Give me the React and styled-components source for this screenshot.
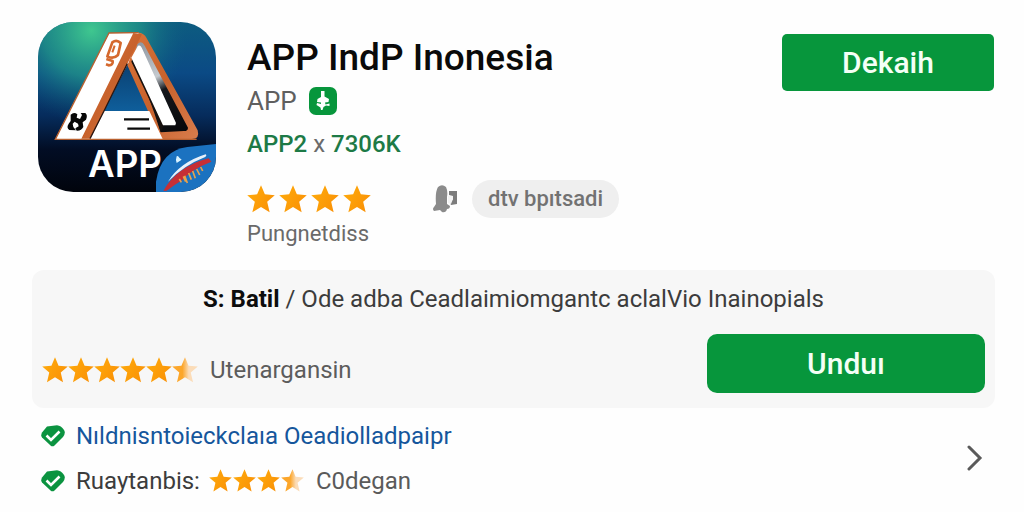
import styled, { createGlobalStyle } from 'styled-components';
import React, { useState } from 'react';

const GREEN = '#07963c';

const STAR = "12,0.2 15.3,8 23.8,8.8 17.3,14.4 19.4,23.4 12,18.8 4.6,23.4 6.7,14.4 0.2,8.8 8.7,8";

//fill : 1 = full, 0.5 = half
function Star(props) {
  const half = props.fill < 1;
  return (
    <StarSvg viewBox="0 0 24 24" $size={props.size} aria-hidden="true">
      <defs>
        <linearGradient id="starFull" x1="0" y1="0" x2="1" y2="0.6">
          <stop offset="0" stopColor="#ffad0c" />
          <stop offset="1" stopColor="#fa9206" />
        </linearGradient>
        <linearGradient id="starHalf">
          <stop offset="0.4" stopColor="#fca62a" />
          <stop offset="0.65" stopColor="#fbdcb8" />
        </linearGradient>
      </defs>
      <polygon points={STAR} fill={half ? "url(#starHalf)" : "url(#starFull)"} />
    </StarSvg>
  );
}

function Stars(props) {
  return (
    <StarsDiv $gap={props.gap} role="img" aria-label={props.value + " / 5"}>
      {Array.from({ length: Math.ceil(props.value) }, (_, i) => (
        <Star key={i} size={props.size} fill={Math.min(1, props.value - i)}></Star>
      ))}
    </StarsDiv>
  );
}

function Logo() {
  return (
    <LogoSvg viewBox="24 21 534 510" preserveAspectRatio="none" role="img" aria-label="APP">
      <defs>
        <linearGradient id="sky" x1="0" y1="0" x2="0" y2="1">
          <stop offset="0" stopColor="#0d5c80" />
          <stop offset="0.3" stopColor="#0b4a85" />
          <stop offset="0.55" stopColor="#062c5c" />
          <stop offset="0.75" stopColor="#020d24" />
          <stop offset="1" stopColor="#01040c" />
        </linearGradient>
        <radialGradient id="glow" cx="0.3" cy="0.05" r="0.55">
          <stop offset="0" stopColor="#3fc78f" />
          <stop offset="0.5" stopColor="#239a8a" stopOpacity="0.7" />
          <stop offset="1" stopColor="#0d5c80" stopOpacity="0" />
        </radialGradient>
        <linearGradient id="inner" x1="0" y1="0" x2="0" y2="1">
          <stop offset="0" stopColor="#0a3f70" />
          <stop offset="1" stopColor="#0f5f9c" />
        </linearGradient>
        <linearGradient id="copper" x1="0" y1="0" x2="1" y2="1">
          <stop offset="0" stopColor="#d9743a" />
          <stop offset="0.5" stopColor="#c8622c" />
          <stop offset="1" stopColor="#d87c4c" />
        </linearGradient>
        <linearGradient id="shade" gradientUnits="userSpaceOnUse" x1="330" y1="80" x2="460" y2="340">
          <stop offset="0" stopColor="#8d96a0" />
          <stop offset="0.4" stopColor="#c5cacf" />
          <stop offset="0.55" stopColor="#15171c" />
          <stop offset="1" stopColor="#08090c" />
        </linearGradient>
        <clipPath id="tile">
          <rect x="24" y="21" width="534" height="510" rx="106" />
        </clipPath>
      </defs>
      <g clipPath="url(#tile)">
        <rect x="24" y="21" width="534" height="510" fill="url(#sky)" />
        <rect x="24" y="21" width="534" height="510" fill="url(#glow)" />
        {/* A frame */}
        <path d="M292 140 L372 292 L218 290 Z" fill="url(#inner)" />
        <path d="M318 54 Q340 50 350 70 L503 346 Q510 372 486 372 L392 372 L290 146 Z" fill="url(#copper)" />
        <path d="M312 124 L322 88 Q334 74 344 92 L474 338 Q474 348 462 348 L392 352 L372 292 Z" fill="url(#shade)" />
        <path d="M304 140 L376 292 L392 352 L402 330 L310 124 Z" fill="#17110f" />
        <path d="M324 92 Q332 88 338 104 L438 324 L436 331 L399 331 L304 128 Z" fill="#fff" />
        <path d="M218 288 L358 288 L398 372 L176 372 Z" fill="#fff" />
        <path d="M237 54 L326 53 L296 142 L178 372 L76 372 Z" fill="#fff" />
        <path d="M310 54 L336 58 L292 146 L181 371 L154 371 Z" fill="url(#copper)" />
        <path d="M292 146 L222 288 L180 371" fill="none" stroke="#2b1712" strokeWidth="4" />
        <path d="M326 53 L237 54 L76 373 L500 373" fill="none" stroke="#b8602f" strokeWidth="4" />
        {/* marks on the frame */}
        <g fill="none" stroke="#d5692e" strokeWidth="8" strokeLinejoin="round">
          <path d="M247 82 Q260 72 272 84 L264 120 Q250 134 232 124 Z" />
          <path d="M254 92 L247 112" strokeWidth="6" />
          <path d="M229 132 L248 138 Q250 150 236 151 L228 148" />
        </g>
        <path d="M122 299 Q132 290 142 298 L140 308 L150 312 L156 300 L152 294 L166 294 Q174 300 168 314 L158 322 L160 336 Q154 348 140 347 L136 340 L146 334 L144 326 L134 320 L128 326 L130 336 L138 346 L118 345 Q108 338 116 326 L122 318 Z" fill="#070707" />
        <path d="M282 313 H357 M292 341 H360" stroke="#0a0a0a" strokeWidth="7" />
        <LogoText x="174" y="486">APP</LogoText>
        {/* corner badge */}
        <path d="M378 531 L378 500 Q392 406 472 396 L558 387 L558 531 Z" fill="#1b72c0" />
        <path d="M400 528 Q440 455 536 430 L544 440 Q486 462 456 496 Q430 512 410 527 Z" fill="#c62f35" />
        <path d="M414 500 Q450 442 527 418 Q532 422 524 427 Q464 450 414 500" fill="#e9f1fa" />
        <path d="M440 424 Q444 420 448 428 L455 434 L440 444 Q436 434 440 424" fill="#d9f3ff" />
        <path d="M448 492 l6 10 M460 484 l7 16 M464 482 l8 22 M476 474 l8 20 M488 468 l8 22 M500 462 l9 18 M512 456 l6 12" stroke="#e9a24a" strokeWidth="5" fill="none" />
      </g>
    </LogoSvg>
  );
}

function CheckBadge() {
  return (
    <CheckSvg viewBox="0 0 24 22" aria-hidden="true">
      <path d="M6 1.5 L16 0.3 Q20 0.6 23 5 Q25 8 22 12 L13.5 20.5 Q11.5 22.2 9.5 20.5 L1 12.5 Q-0.5 10.5 1 7.5 Z" fill="#0b9340" />
      <path d="M5.5 10.5 L10 15 L18.5 6.5" fill="none" stroke="#fff" strokeWidth="2.6" />
    </CheckSvg>
  );
}

function App() {
  const [notify, setNotify] = useState(false);

  return (
    <Page>
      <GlobalStyle />
      <Header>
        <Logo></Logo>
        <Info>
          <Title>APP IndP Inonesia</Title>
          <Developer>
            APP
            <BadgeSvg viewBox="0 0 28 28" aria-hidden="true">
              <rect width="28" height="28" rx="7" fill={GREEN} />
              <path d="M12 4 H15.5 V9.5 L20 12 L19.5 15 L16 15.5 L16.5 17.5 L20.5 16.5 V19 L17 18.5 L14.500 20 L13.500 23 L12 23 L11.500 20.500 L7.500 18 L8 16 L12 17 V15.500 L8 15 L8.500 12 L12 10 Z" fill="#fff" />
            </BadgeSvg>
          </Developer>
          <Version>APP2 <VersionX>x</VersionX> 7306K</Version>
          <RateRow>
            <Stars value={4} size={28} gap={4}></Stars>
            <BellButton aria-label="Notify" aria-pressed={notify} onClick={() => setNotify(!notify)}>
              <svg width="26" height="30" viewBox="0 0 26 30" aria-hidden="true">
                <path d="M6 3 Q10 -0.5 14 3 Q16 7 15 13 L15 20 L18 22 Q18 25 15 25 Q14 29 10 28 L8 26 L2 27 Q0 25 2 23 L4 20 Q3 8 6 3 Z" fill="#8b8b8b" />
                <path d="M17 7 H25 V20 L19 21 L18 19 L21 15 L21 12 L17 11 Z" fill="#7c7c7c" />
                <path d="M16 12 L21 12 L21 15 L19 20 L16 19 Z" fill="#f3f3f3" />
              </svg>
            </BellButton>
            <Chip>dtv bpıtsadi</Chip>
          </RateRow>
          <Caption>Pungnetdiss</Caption>
        </Info>
        <TopButton>Dekaih</TopButton>
      </Header>

      <Panel>
        <PanelText><b>S: Batil</b> / Ode adba Ceadlaimiomgantc aclalVio Inainopials</PanelText>
        <PanelRow>
          <PanelRate>
            <Stars value={5.5} size={26} gap={0}></Stars>
            <span>Utenargansin</span>
          </PanelRate>
          <InstallButton>Unduı</InstallButton>
        </PanelRow>
      </Panel>

      <Footer>
        <List>
          <Item>
            <CheckBadge></CheckBadge>
            <ItemLink href="#detail">Nıldnisntoieckclaıa Oeadiolladpaipr</ItemLink>
          </Item>
          <Item>
            <CheckBadge></CheckBadge>
            <ItemLabel>Ruaytanbis:</ItemLabel>
            <Stars value={3.5} size={23} gap={1}></Stars>
            <ItemNote>C0degan</ItemNote>
          </Item>
        </List>
        <NextButton aria-label="Next">
          <svg width="16" height="26" viewBox="0 0 16 26" aria-hidden="true">
            <path d="M2 2 L13 13 L2 24" fill="none" stroke="#5a5a5a" strokeWidth="3" strokeLinecap="round" />
          </svg>
        </NextButton>
      </Footer>
    </Page>
  );
}

const GlobalStyle = createGlobalStyle`
  *{ box-sizing:border-box; }
  body{
    margin:0;
    background:#fefefe;
    font-family:Roboto, "Liberation Sans", sans-serif;
    font-size:24px;
    line-height:32px;
    color:#3c3c3c;
  }
  button{
    font-family:inherit;
    border:0;
    padding:0;
    cursor:pointer;
  }
`;

const Page = styled.main`
  padding:22px 29px 10px 32px;
`;
const Header = styled.header`
  display:flex;
  align-items:flex-start;
  padding:0 1px 0 6px;
`;
const LogoSvg = styled.svg`
  width:178px;
  height:170px;
  flex:none;
`;
const LogoText = styled.text`
  font-family:Inter, sans-serif;
  font-size:110px;
  font-weight:600;
  fill:#fff;
`;
const Info = styled.div`
  flex:1;
  margin-left:31px;
  padding-top:12px;
`;
const Title = styled.h1`
  margin:0;
  font-size:37px;
  line-height:48px;
  font-weight:500;
  color:#0a0a0a;
`;
const Developer = styled.div`
  display:flex;
  align-items:center;
  gap:12px;
  height:38px;
  font-size:26px;
  color:#5f5f5f;
`;
const BadgeSvg = styled.svg`
  width:28px;
  height:28px;
`;
const Version = styled.div`
  line-height:48px;
  font-weight:500;
  color:#1d7a46;
`;
const VersionX = styled.span`
  font-weight:400;
  color:#6b6b6b;
`;
const RateRow = styled.div`
  display:flex;
  align-items:center;
  margin-top:12px;
`;
const StarsDiv = styled.div`
  display:flex;
  gap:${ props => props.$gap }px;
`;
const StarSvg = styled.svg`
  width:${ props => props.$size }px;
  height:${ props => props.$size }px;
  flex:none;
`;
const BellButton = styled.button`
  display:flex;
  margin:0 14px 0 61px;
  background:none;
`;
const Chip = styled.span`
  padding:0 16px;
  border-radius:20px;
  font-size:22px;
  line-height:38px;
  font-weight:500;
  background:#efefef;
  color:#727272;
`;
const Caption = styled.div`
  font-size:22px;
  line-height:32px;
  color:#6a6a6a;
`;
const GreenButton = styled.button`
  background:${ GREEN };
  color:#f4fff6;
  font-weight:500;
`;
const TopButton = styled(GreenButton)`
  width:212px;
  height:57px;
  margin-top:12px;
  border-radius:5px;
  font-size:30px;
`;
const Panel = styled.section`
  margin-top:20px;
  padding:13px 10px 15px;
  border-radius:12px;
  background:#f7f7f7;
`;
const PanelText = styled.p`
  margin:0 0 19px;
  text-align:center;
  b{
    font-weight:700;
    color:#0d0d0d;
  }
`;
const PanelRow = styled.div`
  display:flex;
  align-items:center;
  justify-content:space-between;
`;
const PanelRate = styled.div`
  display:flex;
  align-items:center;
  gap:12px;
  padding-top:12px;
  color:#5c5c5c;
`;
const InstallButton = styled(GreenButton)`
  width:278px;
  height:59px;
  border-radius:10px;
  font-size:30px;
`;
const Footer = styled.footer`
  display:flex;
  align-items:center;
  justify-content:space-between;
  padding:5px 12px 0 9px;
`;
const List = styled.ul`
  margin:0;
  padding:0;
  list-style:none;
`;
const Item = styled.li`
  display:flex;
  align-items:center;
  height:45px;
`;
const CheckSvg = styled.svg`
  width:24px;
  height:22px;
  margin-right:11px;
`;
const ItemLink = styled.a`
  color:#15569c;
  text-decoration:none;
`;
const ItemLabel = styled.span`
  margin-right:9px;
`;
const ItemNote = styled.span`
  margin-left:12px;
  color:#5a5a5a;
`;
const NextButton = styled.button`
  display:flex;
  background:none;
`;

export default App;
